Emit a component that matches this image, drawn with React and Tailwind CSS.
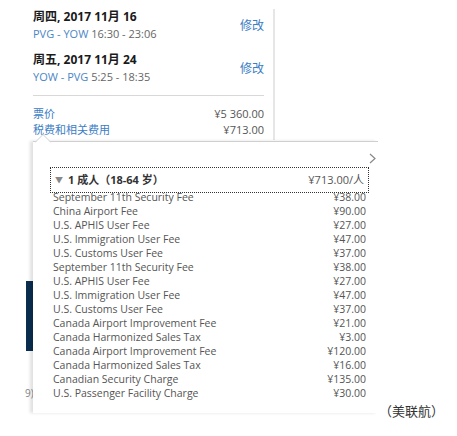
import React from 'react';

const fees = [
  ['September 11th Security Fee', '¥38.00'],
  ['China Airport Fee', '¥90.00'],
  ['U.S. APHIS User Fee', '¥27.00'],
  ['U.S. Immigration User Fee', '¥47.00'],
  ['U.S. Customs User Fee', '¥37.00'],
  ['September 11th Security Fee', '¥38.00'],
  ['U.S. APHIS User Fee', '¥27.00'],
  ['U.S. Immigration User Fee', '¥47.00'],
  ['U.S. Customs User Fee', '¥37.00'],
  ['Canada Airport Improvement Fee', '¥21.00'],
  ['Canada Harmonized Sales Tax', '¥3.00'],
  ['Canada Airport Improvement Fee', '¥120.00'],
  ['Canada Harmonized Sales Tax', '¥16.00'],
  ['Canadian Security Charge', '¥135.00'],
  ['U.S. Passenger Facility Charge', '¥30.00'],
];

const FlightRow = ({ day, date, from, to, time }) => (
  <div className="flex items-start justify-between">
    <div>
      <div className="text-[12px] leading-[16px] font-bold text-[#1a1a1a]">
        {day}, {date}
      </div>
      <div className="text-[11px] leading-[17px] text-[#666]">
        <span className="text-[#4a86c5]">{from} - {to}</span> {time}
      </div>
    </div>
    <a className="mt-[9px] text-[12px] leading-[16px] text-[#3b7dc4]">修改</a>
  </div>
);

export default function App() {
  return (
    <div
      className="relative w-[457px] h-[436px] bg-white overflow-hidden"
      style={{ fontFamily: '"Open Sans", "Noto Sans CJK SC", sans-serif' }}
    >
      {/* page content underneath the popup */}
      <div className="absolute left-[26px] top-[281px] w-[8px] h-[70px] bg-[#0b2e50]" />
      <div className="absolute left-[25px] top-[386px] text-[10px] text-[#888]">9)</div>

      {/* summary card */}
      <div className="w-[275px] h-[141px] pt-[10px]">
        <div className="h-full pl-[33px] pr-[9px] -mt-[1px] border-r-2 border-[#e6e6e6]">
          <FlightRow day="周四" date="2017 11月 16" from="PVG" to="YOW" time="16:30 - 23:06" />
          <div className="mt-[10px]">
            <FlightRow day="周五" date="2017 11月 24" from="YOW" to="PVG" time="5:25 - 18:35" />
          </div>
          <div className="mt-[10px] border-t border-[#d8d8d8]" />
          <div className="mt-[10px] flex justify-between text-[11px] leading-[16px]">
            <span className="text-[#3b7dc4]">票价</span>
            <span className="text-[#555]">¥5 360.00</span>
          </div>
          <div className="flex justify-between text-[11px] leading-[16px]">
            <span className="text-[#3b7dc4]">税费和相关费用</span>
            <span className="text-[#555]">¥713.00</span>
          </div>
        </div>
      </div>

      {/* tax breakdown popup */}
      <div className="relative ml-[33px] w-[345px] h-[272px] bg-white border-t border-[#cfcfcf] shadow-[-3px_0_3px_rgba(0,0,0,0.12)]">
        <svg className="absolute left-[2px] top-[-8px]" width="16" height="9" viewBox="0 0 16 9">
          <path d="M0 8.5 L8 0.5 L16 8.5" fill="white" stroke="#cfcfcf" />
        </svg>
        <svg className="absolute left-[336px] top-[11px]" width="7" height="11" viewBox="0 0 7 11">
          <path d="M1 1 L6 5.5 L1 10" fill="none" stroke="#888" strokeWidth="1.2" />
        </svg>
        <div className="ml-[17px] mt-[25px] w-[319px] h-[26px] border border-dotted border-[#333] flex items-center justify-between px-[4px]">
          <div className="flex items-center text-[11px] font-bold text-[#333]">
            <span className="text-[8px] text-[#888] mr-[5px]">▼</span>
            <span>1 成人（18-64 岁）</span>
          </div>
          <span className="text-[11px] text-[#555]">¥713.00/人</span>
        </div>
        <div className="-mt-[3px] ml-[20px] w-[313px]">
          {fees.map(([name, amount], i) => (
            <div key={i} className="flex justify-between text-[10.5px] leading-[14px] text-[#555]">
              <span>{name}</span>
              <span>{amount}</span>
            </div>
          ))}
        </div>
      </div>

      <div className="absolute left-[379px] top-[402px] text-[13px] text-[#333]">（美联航）</div>
    </div>
  );
}
